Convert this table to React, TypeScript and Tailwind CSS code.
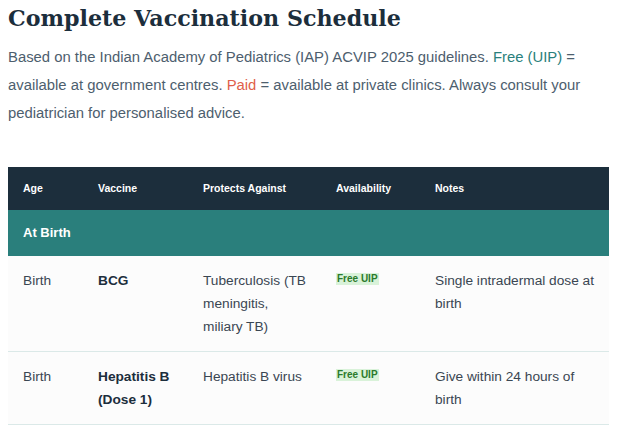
import React from "react";

const Badge = () => (
  <span className="inline-block align-top mt-[4px] bg-[#d9f2d9] text-[#2b7a2b] text-[10px] font-bold leading-[12px] px-[1px]">
    Free UIP
  </span>
);

type Row = { age: string; vaccine: string; protects: string; notes: string };

const rows: Row[] = [
  { age: "Birth", vaccine: "BCG", protects: "Tuberculosis (TB meningitis, miliary TB)", notes: "Single intradermal dose at birth" },
  { age: "Birth", vaccine: "Hepatitis B (Dose 1)", protects: "Hepatitis B virus", notes: "Give within 24 hours of birth" },
];

export default function App() {
  return (
    <div className="bg-white w-[633px] h-[426px] overflow-hidden px-[8px]" style={{ fontFamily: '"Liberation Sans", Arial, sans-serif' }}>
      <h1 className="text-[#1c2e3c] text-[22.2px] font-bold leading-[34px] pt-[1px]" style={{ fontFamily: '"DejaVu Serif", Georgia, serif' }}>
        Complete Vaccination Schedule
      </h1>
      <p className="text-[#4d5e6e] text-[14.85px] leading-[28px] mt-[8px]">
        Based on the Indian Academy of Pediatrics (IAP) ACVIP 2025 guidelines. <span className="text-[#2a7f7c]">Free (UIP)</span> = available at government centres. <span className="text-[#e0604a]">Paid</span> = available at private clinics. Always consult your pediatrician for personalised advice.
      </p>
      <table className="mt-[40px] w-[601px] border-collapse table-fixed text-[13.7px]">
        <colgroup>
          <col className="w-[75px]" />
          <col className="w-[105px]" />
          <col className="w-[133px]" />
          <col className="w-[99px]" />
          <col className="w-[189px]" />
        </colgroup>
        <thead>
          <tr className="bg-[#1c2e3c] text-white text-[10.5px] font-bold h-[43px]">
            <th className="text-left pl-[15px] font-bold">Age</th>
            <th className="text-left pl-[15px] font-bold">Vaccine</th>
            <th className="text-left pl-[15px] font-bold">Protects Against</th>
            <th className="text-left pl-[15px] font-bold">Availability</th>
            <th className="text-left pl-[15px] font-bold">Notes</th>
          </tr>
        </thead>
        <tbody>
          <tr className="bg-[#2a7f7c] h-[46px]">
            <td colSpan={5} className="pl-[15px] text-white text-[13px] font-bold">At Birth</td>
          </tr>
          {rows.map((r, i) => (
            <tr key={i} className="bg-[#fcfcfc] border-b border-[#dbe9e8] align-top text-[#3a4652] leading-[23px]">
              <td className="pl-[15px] pr-[10px] py-[13px]">{r.age}</td>
              <td className="pl-[15px] pr-[10px] py-[13px] font-bold text-[#1c2e3c]">{r.vaccine}</td>
              <td className="pl-[15px] pr-[10px] py-[13px]">{r.protects}</td>
              <td className="pl-[15px] pr-[10px] py-[13px]"><Badge /></td>
              <td className="pl-[15px] pr-[10px] py-[13px]">{r.notes}</td>
            </tr>
          ))}
        </tbody>
      </table>
    </div>
  );
}
